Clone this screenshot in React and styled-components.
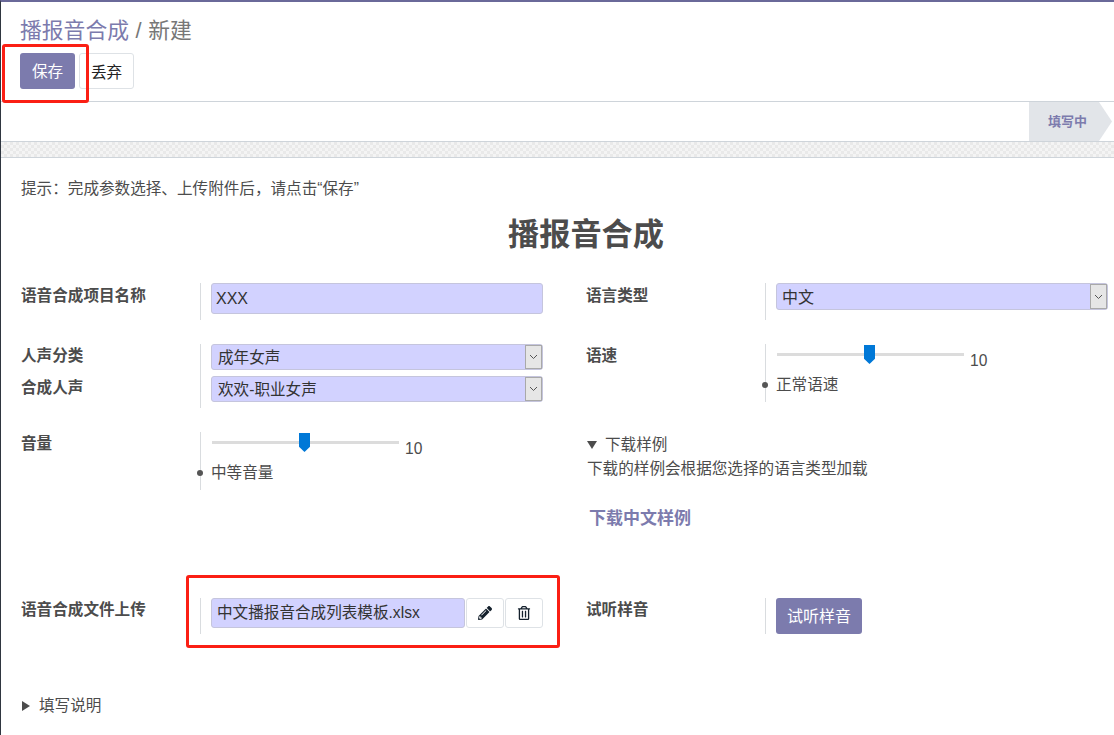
import React from 'react'
import styled, { createGlobalStyle } from 'styled-components'
import { FaPencilAlt, FaRegTrashAlt } from 'react-icons/fa'

const GlobalStyle = createGlobalStyle`
  html, body {
    margin: 0;
    padding: 0;
    background: #fff;
  }
  body {
    font-family: "Liberation Sans", "Noto Sans CJK SC", sans-serif;
    font-size: 15.6px;
    color: #4c4c4c;
  }
`

const Page = styled.div`
  position: relative;
  box-sizing: border-box;
  width: 1114px;
  height: 735px;
  overflow: hidden;
  border-top: 2px solid #6a6999;
  border-left: 1px solid #2f3640;
`

const Header = styled.header`
  box-sizing: border-box;
  height: 100px;
  padding: 14px 19px 0;
  border-bottom: 1px solid #ced4da;
`

const Breadcrumb = styled.div`
  font-size: 21.8px;
  word-spacing: 0.5px;
  line-height: 30px;
  color: #7c7bad;
  margin-bottom: 7px;

  span {
    color: #777;
  }
`

const Toolbar = styled.div`
  display: flex;
  gap: 4px;
`

const PrimaryButton = styled.button`
  box-sizing: border-box;
  height: 36px;
  width: ${props => props.wide ? '86px' : '55px'};
  padding: 0 0 2px;
  border: 0;
  border-radius: 3px;
  background: #7c7bad;
  color: #fff;
  font: inherit;
  font-size: ${props => props.wide ? '16px' : '15.6px'};
`

const SecondaryButton = styled.button`
  box-sizing: border-box;
  width: 55px;
  height: 36px;
  padding: 0 0 1px;
  background: #fff;
  border: 1px solid #dee2e6;
  border-radius: 3px;
  color: #222;
  font: inherit;
`

const StatusBar = styled.div`
  box-sizing: border-box;
  height: 40px;
  display: flex;
  justify-content: flex-end;
  padding-right: 2px;
  border-bottom: 1px solid #ced4da;
`

const StatusStep = styled.div`
  box-sizing: border-box;
  width: 83px;
  padding-left: 19px;
  line-height: 39px;
  font-size: 13px;
  font-weight: bold;
  color: #7c7bad;
  background: #e2e5e9;
  clip-path: polygon(0 0, 70px 0, 100% 50%, 70px 100%, 0 100%);
`

const Band = styled.div`
  height: 15px;
  border-bottom: 1px solid #ced4da;
  background-color: #f4f4f4;
  background-image: conic-gradient(#e9e9e9 25%, transparent 0 50%, #e9e9e9 0 75%, transparent 0);
  background-size: 6px 6px;
`

const Sheet = styled.main`
  width: 1130px;
  padding: 20px 0 0 20px;
`

const Notice = styled.p`
  margin: 0 0 15px;
  line-height: 22px;
`

const FormTitle = styled.h1`
  margin: 0 0 28px;
  text-align: center;
  font-size: 31.2px;
  line-height: 40px;
  font-weight: bold;
  color: #4c4c4c;
`

const FormGrid = styled.div`
  display: grid;
  grid-template-columns: 565px 565px;
  grid-template-rows: 37px 64px 142px 36px;
  row-gap: 24px;
`

const Field = styled.div`
  display: flex;
  align-items: flex-start;
`

const Labels = styled.div`
  width: 179px;
  flex: none;
`

const Label = styled.label`
  display: block;
  box-sizing: border-box;
  height: ${props => props.stacked ? '32px' : 'auto'};
  padding-top: ${props => props.first ? '2px' : '1px'};
  line-height: 22px;
  font-weight: bold;
  color: #4c4c4c;
`

const Value = styled.div`
  position: relative;
  box-sizing: border-box;
  width: 343px;
  height: ${props => props.height}px;
  padding-left: 10px;
  border-left: 1px solid #d9dcdf;
`

const TextInput = styled.input`
  box-sizing: border-box;
  display: block;
  width: 332px;
  height: 31px;
  padding: 0 4px;
  border: 1px solid #c5c5dd;
  border-radius: 3px;
  background: #d2d2ff;
  color: #333;
  font: inherit;
  font-size: 16px;
  outline: none;
`

const Select = styled.div`
  box-sizing: border-box;
  display: flex;
  align-items: stretch;
  justify-content: space-between;
  width: 332px;
  height: ${props => props.tall ? '27px' : '26px'};
  margin-bottom: 6px;
  padding-left: ${props => props.tall ? '5px' : '6px'};
  border: 1px solid #c5c5dd;
  border-radius: 3px;
  background: #d2d2ff;
  color: #333;
  font-size: ${props => props.tall ? '16px' : '15.6px'};
  line-height: ${props => props.tall ? '28px' : '26px'};
`

const SelectArrow = styled.span`
  box-sizing: border-box;
  width: 17px;
  display: flex;
  align-items: center;
  justify-content: center;
  background: #e6e6e6;
  border: 1px solid #a9a9a9;
`

const SliderRow = styled.div`
  display: flex;
  height: 30px;
`

const SliderTrack = styled.div`
  position: relative;
  width: 187px;
  height: 3px;
  margin: 9px 0 0 1px;
  background: #dcdcdc;
`

const SliderThumb = styled.span`
  position: absolute;
  top: -8px;
  left: 87px;
  width: 11px;
  height: 19px;
  background: #0078d7;
  clip-path: polygon(0 0, 100% 0, 100% 72%, 50% 100%, 0 72%);
`

const SliderValue = styled.span`
  margin: 7px 0 0 6px;
  line-height: 20px;
`

const Caption = styled.div`
  line-height: 22px;

  &::before {
    content: "";
    position: absolute;
    left: -4px;
    top: 38px;
    width: 6px;
    height: 6px;
    border-radius: 50%;
    background: #555;
  }
`

const SampleBlock = styled.div`
  padding-top: 2px;
  line-height: 22px;
`

const Disclosure = styled.div`
  display: flex;
  align-items: center;
  gap: ${props => props.closed ? '9px' : '8px'};
  padding-left: 1px;
  line-height: 22px;
`

const TriangleDown = styled.span`
  width: 0;
  height: 0;
  border-left: 5px solid transparent;
  border-right: 5px solid transparent;
  border-top: 8px solid #4c4c4c;
`

const TriangleRight = styled.span`
  width: 0;
  height: 0;
  border-top: 5px solid transparent;
  border-bottom: 5px solid transparent;
  border-left: 8px solid #4c4c4c;
`

const SampleHint = styled.div`
  padding: 1px 0 0 1px;
  line-height: 24px;
`

const SampleLink = styled.a`
  display: block;
  margin: 26px 0 0 3px;
  line-height: 24px;
  font-size: 17px;
  font-weight: bold;
  color: #7c7bad;
`

const FileRow = styled.div`
  display: flex;
  gap: 1px;
`

const FileName = styled.div`
  box-sizing: border-box;
  width: 254px;
  height: 30px;
  padding-left: 5px;
  border: 1px solid #c5c5dd;
  border-radius: 3px;
  background: #d2d2ff;
  color: #333;
  line-height: 28px;
`

const IconButton = styled.button`
  box-sizing: border-box;
  width: 38px;
  height: 30px;
  padding: 0;
  display: flex;
  align-items: center;
  justify-content: center;
  border: 1px solid #dee2e6;
  border-radius: 3px;
  background: #fff;
  color: #14202c;
  font-size: 14px;
`

const Footer = styled.div`
  margin-top: 61px;
`

const Highlight = styled.div`
  position: absolute;
  box-sizing: border-box;
  left: ${props => props.x}px;
  top: ${props => props.y}px;
  width: ${props => props.w}px;
  height: ${props => props.h}px;
  border: 3px solid #fb1f14;
  border-radius: 3px;
  pointer-events: none;
`

function Arrow() {
  return (
    <SelectArrow>
      <svg width="9" height="6" viewBox="0 0 9 6">
        <path d="M1 1l3.5 3.5L8 1" fill="none" stroke="#555" strokeWidth="1" />
      </svg>
    </SelectArrow>
  )
}

function Slider({ caption }) {
  return (
    <>
      <SliderRow>
        <SliderTrack>
          <SliderThumb />
        </SliderTrack>
        <SliderValue>10</SliderValue>
      </SliderRow>
      <Caption>{caption}</Caption>
    </>
  )
}

export default function App() {
  return (
    <Page>
      <GlobalStyle />
      <Header>
        <Breadcrumb>播报音合成 <span>/ 新建</span></Breadcrumb>
        <Toolbar>
          <PrimaryButton>保存</PrimaryButton>
          <SecondaryButton>丢弃</SecondaryButton>
        </Toolbar>
      </Header>
      <StatusBar>
        <StatusStep>填写中</StatusStep>
      </StatusBar>
      <Band />
      <Sheet>
        <Notice>{'提示\uFF1A完成参数选择、上传附件后\uFF0C请点击“保存”'}</Notice>
        <FormTitle>播报音合成</FormTitle>
        <FormGrid>
          <Field>
            <Labels><Label first>语音合成项目名称</Label></Labels>
            <Value height={37}>
              <TextInput defaultValue="XXX" />
            </Value>
          </Field>
          <Field>
            <Labels><Label first>语言类型</Label></Labels>
            <Value height={37}>
              <Select tall>中文<Arrow /></Select>
            </Value>
          </Field>

          <Field>
            <Labels>
              <Label stacked>人声分类</Label>
              <Label stacked>合成人声</Label>
            </Labels>
            <Value height={64}>
              <Select>成年女声<Arrow /></Select>
              <Select>欢欢-职业女声<Arrow /></Select>
            </Value>
          </Field>
          <Field>
            <Labels><Label>语速</Label></Labels>
            <Value height={58}>
              <Slider caption="正常语速" />
            </Value>
          </Field>

          <Field>
            <Labels><Label>音量</Label></Labels>
            <Value height={58}>
              <Slider caption="中等音量" />
            </Value>
          </Field>
          <SampleBlock>
            <Disclosure><TriangleDown />下载样例</Disclosure>
            <SampleHint>下载的样例会根据您选择的语言类型加载</SampleHint>
            <SampleLink>下载中文样例</SampleLink>
          </SampleBlock>

          <Field>
            <Labels><Label>语音合成文件上传</Label></Labels>
            <Value height={36}>
              <FileRow>
                <FileName>中文播报音合成列表模板.xlsx</FileName>
                <IconButton><FaPencilAlt /></IconButton>
                <IconButton><FaRegTrashAlt /></IconButton>
              </FileRow>
            </Value>
          </Field>
          <Field>
            <Labels><Label>试听样音</Label></Labels>
            <Value height={36}>
              <PrimaryButton wide>试听样音</PrimaryButton>
            </Value>
          </Field>
        </FormGrid>
        <Footer>
          <Disclosure closed><TriangleRight />填写说明</Disclosure>
        </Footer>
      </Sheet>
      <Highlight x={1} y={42} w={87} h={59} />
      <Highlight x={185} y={573} w={374} h={73} />
    </Page>
  )
}
